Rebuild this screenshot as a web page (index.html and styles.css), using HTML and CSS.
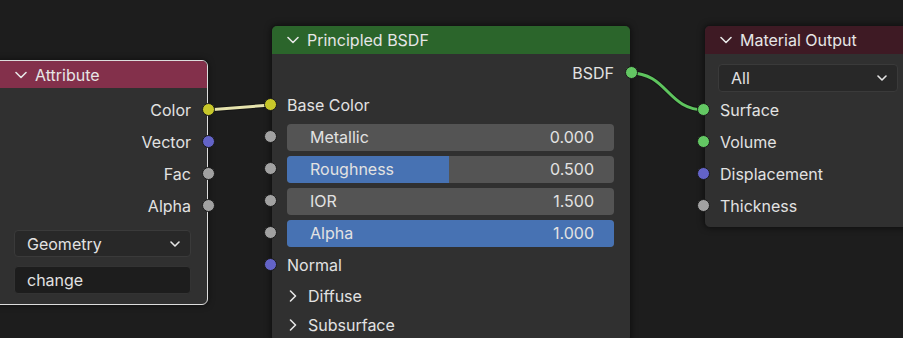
FILE: index.html
```html
<!DOCTYPE html>
<html lang="en">
<head>
    <meta charset="UTF-8">
    <title>Shader Editor</title>
    <link rel="stylesheet" href="styles.css">
</head>
<body>
<div class="canvas">
    <svg class="links" width="903" height="338" viewBox="0 0 903 338">
        <line x1="207" y1="110" x2="271" y2="105" class="link-outline"/>
        <line x1="207" y1="110" x2="271" y2="105" class="link-yellow"/>
        <path d="M630 73 C668 73 667 110 705 110" class="link-outline"/>
        <path d="M630 73 C668 73 667 110 705 110" class="link-green"/>
    </svg>

    <!-- Attribute node -->
    <div class="node node-attribute selected">
        <div class="node-header hdr-attribute">
            <svg class="chev" width="12" height="8" viewBox="0 0 12 8"><path d="M1 1.5 L6 6.5 L11 1.5"/></svg>
            <span>Attribute</span>
        </div>
        <div class="node-body body-attribute">
            <div class="row out">Color<i class="socket s-right yellow"></i></div>
            <div class="row out">Vector<i class="socket s-right purple"></i></div>
            <div class="row out">Fac<i class="socket s-right grey"></i></div>
            <div class="row out">Alpha<i class="socket s-right grey"></i></div>
            <div class="dropdown dd-attr">
                <span>Geometry</span>
                <svg width="10" height="6" viewBox="0 0 10 6"><path d="M1 1 L5 5 L9 1"/></svg>
            </div>
            <div class="textfield">change</div>
        </div>
    </div>

    <!-- Principled BSDF node -->
    <div class="node node-bsdf">
        <div class="node-header hdr-bsdf">
            <svg class="chev" width="12" height="8" viewBox="0 0 12 8"><path d="M1 1.5 L6 6.5 L11 1.5"/></svg>
            <span>Principled BSDF</span>
        </div>
        <div class="node-body body-bsdf">
            <div class="row out">BSDF<i class="socket s-right green"></i></div>
            <div class="row in">Base Color<i class="socket s-left yellow"></i></div>
            <div class="row in">
                <i class="socket s-left grey"></i>
                <div class="slider"><span>Metallic</span><span>0.000</span></div>
            </div>
            <div class="row in">
                <i class="socket s-left grey"></i>
                <div class="slider"><div class="fill" style="width: 49.5%"></div><span>Roughness</span><span>0.500</span></div>
            </div>
            <div class="row in">
                <i class="socket s-left grey"></i>
                <div class="slider"><span>IOR</span><span>1.500</span></div>
            </div>
            <div class="row in">
                <i class="socket s-left grey"></i>
                <div class="slider"><div class="fill" style="width: 100%"></div><span>Alpha</span><span>1.000</span></div>
            </div>
            <div class="row in">Normal<i class="socket s-left purple"></i></div>
            <div class="panel-row">
                <svg width="8" height="12" viewBox="0 0 8 12"><path d="M1.5 1 L6.5 6 L1.5 11"/></svg>
                <span>Diffuse</span>
            </div>
            <div class="panel-row">
                <svg width="8" height="12" viewBox="0 0 8 12"><path d="M1.5 1 L6.5 6 L1.5 11"/></svg>
                <span>Subsurface</span>
            </div>
        </div>
    </div>

    <!-- Material Output node -->
    <div class="node node-output">
        <div class="node-header hdr-output">
            <svg class="chev" width="12" height="8" viewBox="0 0 12 8"><path d="M1 1.5 L6 6.5 L11 1.5"/></svg>
            <span>Material Output</span>
        </div>
        <div class="node-body body-output">
            <div class="dropdown dd-out">
                <span>All</span>
                <svg width="10" height="6" viewBox="0 0 10 6"><path d="M1 1 L5 5 L9 1"/></svg>
            </div>
            <div class="row in">Surface<i class="socket s-left green"></i></div>
            <div class="row in">Volume<i class="socket s-left green"></i></div>
            <div class="row in">Displacement<i class="socket s-left purple"></i></div>
            <div class="row in">Thickness<i class="socket s-left grey"></i></div>
        </div>
    </div>
</div>
</body>
</html>
```

FILE: styles.css
```css
body {
    margin: 0;
    background: #1d1d1d;
    font-family: Inter, "Noto Sans", sans-serif;
    font-size: 16px;
    color: #e2e2e2;
    overflow: hidden;
}
.canvas {
    position: relative;
    width: 903px;
    height: 338px;
    background: #1d1d1d;
    overflow: hidden;
}
.links {
    position: absolute;
    left: 0;
    top: 0;
    z-index: 0;
}
.link-outline {
    fill: none;
    stroke: #151515;
    stroke-width: 5;
}
.link-yellow {
    fill: none;
    stroke: #e6e3ad;
    stroke-width: 3;
}
.link-green {
    fill: none;
    stroke: #5ec45e;
    stroke-width: 3;
}

/* nodes */
.node {
    position: absolute;
    z-index: 1;
    box-sizing: border-box;
    background: #303030;
    border: 1px solid #141414;
    border-radius: 6px;
    box-shadow: 0 0 6px rgba(0, 0, 0, 0.55);
}
.node.selected {
    border-color: #dcdcdc;
}
.node-attribute {
    left: -12px;
    top: 60px;
    width: 220px;
}
.node-bsdf {
    left: 271px;
    top: 25px;
    width: 360px;
    height: 318px;
}
.node-output {
    left: 704px;
    top: 25px;
    width: 220px;
}
.node-header {
    display: flex;
    align-items: center;
    height: 28px;
    border-radius: 5px 5px 0 0;
    color: #e6e6e6;
}
.node-header .chev {
    margin-right: 8px;
}
.chev path, .dropdown path, .panel-row path {
    fill: none;
    stroke: #e6e6e6;
    stroke-width: 1.6;
    stroke-linecap: round;
    stroke-linejoin: round;
}
.hdr-attribute {
    background: #83304b;
    padding-left: 26px;
    height: 27px;
}
.hdr-bsdf {
    background: #2b652b;
    padding-left: 15px;
}
.hdr-output {
    background: #3e1a24;
    padding-left: 15px;
}

/* rows */
.row {
    position: relative;
    display: flex;
    align-items: center;
    height: 32px;
}
.row.out {
    justify-content: flex-end;
    padding-right: 16px;
}
.row.in {
    padding-left: 15px;
}
.socket {
    position: absolute;
    top: 50%;
    width: 11px;
    height: 11px;
    margin-top: -7px;
    border: 1px solid #1a1a1a;
    border-radius: 50%;
}
.s-right {
    right: -8px;
}
.s-left {
    left: -8px;
}
.yellow { background: #c7c72a; }
.purple { background: #6363c7; }
.grey { background: #a1a1a1; }
.green { background: #63c763; }

.body-attribute {
    padding: 6px 16px 10px 25px;
}
.body-attribute .row.out {
    padding-right: 0;
}
.body-attribute .socket.s-right {
    right: -24px;
}
.dropdown {
    display: flex;
    align-items: center;
    justify-content: space-between;
    box-sizing: border-box;
    height: 27px;
    padding: 0 10px 0 12px;
    background: #282828;
    border: 1px solid #3a3a3a;
    border-radius: 4px;
}
.dd-attr {
    margin-top: 8px;
}
.textfield {
    box-sizing: border-box;
    height: 28px;
    margin-top: 9px;
    padding-left: 12px;
    line-height: 26px;
    background: #1d1d1d;
    border: 1px solid #333;
    border-radius: 4px;
}

.body-bsdf {
    padding-top: 3px;
}
.body-bsdf .row.in {
    padding-right: 16px;
}
.slider {
    position: relative;
    flex: 1;
    display: flex;
    justify-content: space-between;
    align-items: center;
    height: 27px;
    padding: 0 20px 0 23px;
    background: #545454;
    border-radius: 4px;
    overflow: hidden;
}
.slider span {
    position: relative;
}
.slider .fill {
    position: absolute;
    left: 0;
    top: 0;
    bottom: 0;
    background: #4772b3;
}
.panel-row {
    display: flex;
    align-items: center;
    gap: 11px;
    height: 29px;
    padding-left: 17px;
}

.body-output {
    padding: 10px 0 5px 0;
}
.dd-out {
    height: 28px;
    margin: 0 7px 2px 13px;
    width: 180px;
}
```
